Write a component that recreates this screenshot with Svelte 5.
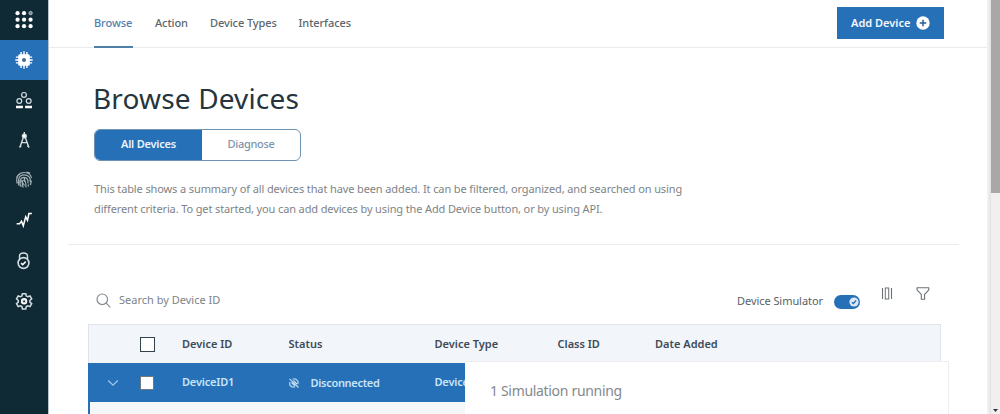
<script>
  const tabs = [
    { label: 'Browse', w: 39, active: true },
    { label: 'Action', w: 33 },
    { label: 'Device Types', w: 66.5 },
    { label: 'Interfaces', w: 53 }
  ];
  const nav = ['apps', 'chip', 'members', 'compass', 'fingerprint', 'usage', 'lock', 'settings'];
  const dots = [5, 12, 19].flatMap((y) => [5, 12, 19].map((x) => ({ x, y })));
  const spokes = [0, 90, 180, 270];
</script>

<div class="app">
  <nav class="side">
    {#each nav as name}
      <div class="item" class:on={name === 'chip'}>
        <svg width="20" height="20" viewBox="0 0 20 20" fill="none" stroke="#d3dde1" stroke-width="1.2">
          {#if name === 'apps'}
            {#each dots as d, i}
              {#if i === 2}
                <circle cx="16.6" cy="3.1" r="1.7" fill="#7f9199" stroke="#aab7bc" stroke-width="1" />
              {:else}
                <circle cx={d.x * 0.93 - 1.1} cy={d.y * 0.93 - 1.5} r="2.1" fill="#fff" stroke="none" />
              {/if}
            {/each}
          {:else if name === 'chip'}
            <g fill="#fff" stroke="#fff">
              {#each spokes as a}
                <path transform="rotate({a} 10 10)" d="M7.1 5.500V1.900M10 5.500V1.300M12.900 5.500V1.900" stroke-width="1.400" />
              {/each}
              <rect x="4.200" y="4.200" width="11.600" height="11.600" rx="1.500" stroke="none" />
            </g>
            <circle cx="10" cy="10" r="2" fill="#47698a" stroke="none" />
          {:else if name === 'members'}
            <circle cx="10" cy="4.900" r="2.400" />
            <circle cx="5.300" cy="11" r="2.400" />
            <circle cx="14.700" cy="11" r="2.400" />
            <path d="M2.600 17.600v-1.300h5.700v1.300zM11.700 17.600v-1.300h5.700v1.300z" fill="#fff" stroke="#fff" />
          {:else if name === 'compass'}
            <path d="M10.300 2v3M9.300 7.500L6 17M11.300 7.500l3.400 9.500M7.700 12.600h5.200" stroke-width="1.400" />
            <circle cx="10.300" cy="6" r="2" fill="#fff" />
            <path d="M5.500 17.500l1.800-1.700M15.200 17.500l-1.800-1.700" />
          {:else if name === 'fingerprint'}
            <g stroke="#a3b1b7" stroke-width="1.200">
              <path d="M3.200 13.500C1.300 7 5 2.500 10 2.500c4 0 7 2.300 7.500 5.500M5 15.800C3.500 11 4.500 4.800 10 4.800c4.500 0 7 3.200 6.400 7.400M7.200 17c-2-4-1.600-9.700 2.800-9.700 3.200 0 4.500 2.800 4 6.200M9.300 17.500C7.500 13 8 10 10 10s2 3.500 2 7.500M14 16.500l.6-2M16.400 15l1-4.500M2.500 7.500l2-3M12.500 2.200l3.500 1M6.500 9.500l4 6M4 12h3M10.500 7v5" />
            </g>
          {:else if name === 'usage'}
            <path d="M2.600 13.700h3l1.900-2.500 1.800 4.600 2.400-9 1.800 3.500 1.400-6.800h3" stroke="#fff" stroke-width="1.500" />
          {:else if name === 'lock'}
            <path d="M5.500 8V5.300c0-4.500 8-4.500 8 0V8" stroke-width="1.400" />
            <circle cx="9.500" cy="12" r="5.400" stroke-width="1.600" />
            <path d="M7.100 12.100l1.600 1.600 3-3.100" stroke="#fff" stroke-width="1.600" />
          {:else}
            <path d="M8.400 2.700h3.400l.5 2.300 1.500.8 2.200-.8 1.700 2.900-1.800 1.600v1.600l1.800 1.600-1.700 2.900-2.200-.8-1.500.8-.5 2.300H8.400l-.5-2.300-1.500-.8-2.200.8-1.700-2.900 1.800-1.600V9.500L2.500 7.900l1.700-2.900 2.200.8 1.500-.8z" stroke-width="1.500" />
            <circle cx="10.100" cy="10.300" r="2.500" fill="#b9c6ca" stroke="#fff" stroke-width="1.400" />
            <circle cx="10.100" cy="10.300" r=".9" fill="#102a35" stroke="none" />
          {/if}
        </svg>
      </div>
    {/each}
  </nav>

  <main>
    <header>
      {#each tabs as t}
        <a class:active={t.active} style:width="{t.w}px">{t.label}</a>
      {/each}
      <button class="add">
        <span>Add Device</span>
        <svg width="14" height="14" viewBox="0 0 14 14"><circle cx="7" cy="7" r="6.700" fill="#fff" /><path d="M7 3.700v6.600M3.700 7h6.600" stroke="#2a5e91" stroke-width="1.500" /></svg>
      </button>
    </header>

    <section class="intro">
      <h1>Browse Devices</h1>
      <div class="switch">
        <span class="sel">All Devices</span>
        <span class="other">Diagnose</span>
      </div>
      <p>
        <span class="l1">This table shows a summary of all devices that have been added. It can be filtered, organized, and searched on using</span><br />
        <span class="l2">different criteria. To get started, you can add devices by using the Add Device button, or by using API.</span>
      </p>
    </section>

    <section class="content">
      <div class="tools">
        <svg class="mag" width="15" height="15" viewBox="0 0 15 15" fill="none" stroke="#858c90" stroke-width="1.200"><circle cx="6.300" cy="6.300" r="5.300" /><path d="M10.200 10.200l4.100 4.100" /></svg>
        <span class="search">Search by Device ID</span>
        <span class="sim">Device Simulator</span>
        <svg class="toggle" width="26" height="14" viewBox="0 0 26 14"><rect width="26" height="14" rx="7" fill="#2670b8" /><circle cx="20" cy="7" r="4.600" fill="#dce8f3" /><path d="M17.900 7.200l1.500 1.300 2.700-3" fill="none" stroke="#2670b8" stroke-width="1.300" /></svg>
        <svg class="cols" width="12" height="13" viewBox="0 0 12 13" fill="none" stroke="#6b7276"><path d="M1.500 1v11M10.500 1v11" stroke-width="1.100" /><rect x="4.300" y="1" width="3.400" height="11" /></svg>
        <svg class="filter" width="14" height="13" viewBox="0 0 14 13" fill="none" stroke="#6b7276" stroke-width="1.100"><path d="M1 .8h11.800v2L8.600 7.300v4.900H5.300V7.300L1 2.800z" stroke-linejoin="round" /></svg>
      </div>

      <div class="table">
        <div class="row head">
          <span></span>
          <i class="box"></i>
          <b>Device ID</b>
          <b>Status</b>
          <b>Device Type</b>
          <b>Class ID</b>
          <b>Date Added</b>
        </div>
        <div class="row device">
          <svg class="chev" width="12" height="8" viewBox="0 0 12 8" fill="none" stroke="#9dcbee" stroke-width="1.200"><path d="M1.200 1.500L6 6.200l4.800-4.700" /></svg>
          <i class="box full"></i>
          <b>DeviceID1</b>
          <div class="status">
            <svg width="10" height="10" viewBox="0 0 10 10" fill="none" stroke="#c6e2f5" stroke-width="1.100"><path d="M.5.800l9 8.700M3.500 1h3.200L9 3.200v3M.8 4v3l2 2h3.300M2.500 4.500L6 8M4.500 2.500L8 6" /></svg>
            <b>Disconnected</b>
          </div>
          <b>DeviceType1</b>
        </div>
        <div class="expanded"></div>
      </div>
    </section>
    <aside><span>1 Simulation running</span></aside>
  </main>

  <div class="edge"></div>
  <div class="scroll">
    <div class="thumb"></div>
    <svg width="9" height="6" viewBox="0 0 9 6"><path d="M2 1h5L4.500 4z" fill="#333" /></svg>
  </div>
</div>

<style>
  :global(body) { background: #fff; overflow: hidden; }
  .app { display: flex; height: 414px; overflow: hidden; font: 11px/16px 'Noto Sans', 'Open Sans', sans-serif; color: #5c666c; }
  .side { width: 49px; flex: none; background: #102a35; border-right: 1px solid #b9c5ca; box-sizing: border-box; }
  .item { height: 40.200px; display: flex; align-items: center; justify-content: center; }
  .item:nth-child(n + 4):nth-child(-n + 6) svg { margin-top: -2px; }
  .item.on { background: #2670b8; }
  main { position: relative; width: 938px; flex: none; display: flex; flex-direction: column; }
  header { height: 48px; box-sizing: border-box; border-bottom: 1px solid #e9ecef; display: flex; gap: 22px; padding-left: 45px; flex: none; }
  header a { height: 48px; box-sizing: border-box; padding-top: 15px; white-space: nowrap; flex: none; font-weight: 500; letter-spacing: -.08px; }
  header a.active { color: #4f80b0; border-bottom: 2px solid #4f80aa; }
  .add { margin: 7px 43px 0 auto; width: 107px; height: 32px; background: #2670b8; border: 0; padding: 0 14px 0 14px; display: flex; align-items: center; justify-content: space-between; color: #f3f8fd; font: 600 11px/16px 'Noto Sans', sans-serif; white-space: nowrap; }
  .intro { margin: 0 28px 0 19px; padding: 30px 0 0 26px; height: 197px; box-sizing: border-box; border-bottom: 1px solid #e9ebec; flex: none; }
  h1 { margin: 0 0 0 -1px; font-weight: 400; font-size: 28px; line-height: 40px; letter-spacing: .15px; color: #26353d; white-space: nowrap; }
  .switch { display: grid; grid-template-columns: 107px 1fr; width: 207px; height: 32px; margin-top: 11px; border: 1px solid #6e93b4; border-radius: 6px; box-sizing: border-box; line-height: 28px; text-align: center; overflow: hidden; color: #7d94ad; }
  .sel { background: #2670b8; color: #eaf4fc; font-weight: 600; letter-spacing: -.2px; }
  .other { font-weight: 500; letter-spacing: -.3px; }
  p { margin: 18px 0 0; line-height: 20px; color: #7e8488; white-space: nowrap; }
  .l1 { letter-spacing: -.115px; }
  .l2 { letter-spacing: -.125px; }
  .content { padding: 0 46px 0 39px; flex: 1; }
  .tools { display: flex; height: 79px; align-items: flex-start; padding-left: 8px; white-space: nowrap; box-sizing: border-box; }
  .mag { margin-top: 48px; margin-right: 8px; }
  .search { margin-top: 47px; color: #7d8387; }
  .sim { margin: 48px 11px 0 auto; color: #586166; letter-spacing: -.06px; }
  .toggle { margin-top: 50px; }
  .cols { margin: 42px 23px 0 21px; }
  .filter { margin: 42px 11px 0 0; }
  .table { border-top: 1px solid #dfe4e9; border-right: 1px solid #dfe4ea; }
  .row { display: grid; grid-template-columns: 52px 42px 106.500px 146px 123px 97.500px 1fr; align-items: center; height: 38px; white-space: nowrap; }
  .row b { font-weight: 600; }
  .head { background: #f2f5fa; color: #3d4b58; box-sizing: border-box; box-shadow: inset 1px 0 #dfe4ea; }
  .head b { padding-bottom: 1px; }
  .device { height: 39px; background: #2670b8; color: #c9e4f7; }
  .device b { letter-spacing: -.18px; padding-bottom: 1px; }
  .box { width: 15px; height: 15px; box-sizing: border-box; border: 1px solid #33424d; background: #fff; }
  .full { border-color: #6f7a80; width: 14px; height: 14px; }
  .chev { margin-left: 19px; }
  .status { display: flex; align-items: center; gap: 12px; }
  .status b { letter-spacing: -.3px; padding: 0; }
  .expanded { height: 20px; background: #f5f7f9; border-left: 2px solid #2670b8; }
  aside { position: absolute; left: 416px; top: 361px; width: 484px; height: 60px; box-sizing: border-box; background: #fff; border: 1px solid #eceeef; border-left: 0; padding: 19px 0 0 25px; font-size: 14px; line-height: 20px; color: #83898d; white-space: nowrap; letter-spacing: -.32px; }
  .edge { width: 4px; background: linear-gradient(90deg, #f5f5f5, #e2e2e2); }
  .scroll { flex: 1; background: #f0f0f0; display: flex; flex-direction: column; justify-content: space-between; }
  .thumb { height: 193px; background: #a8a8a8; }
</style>
